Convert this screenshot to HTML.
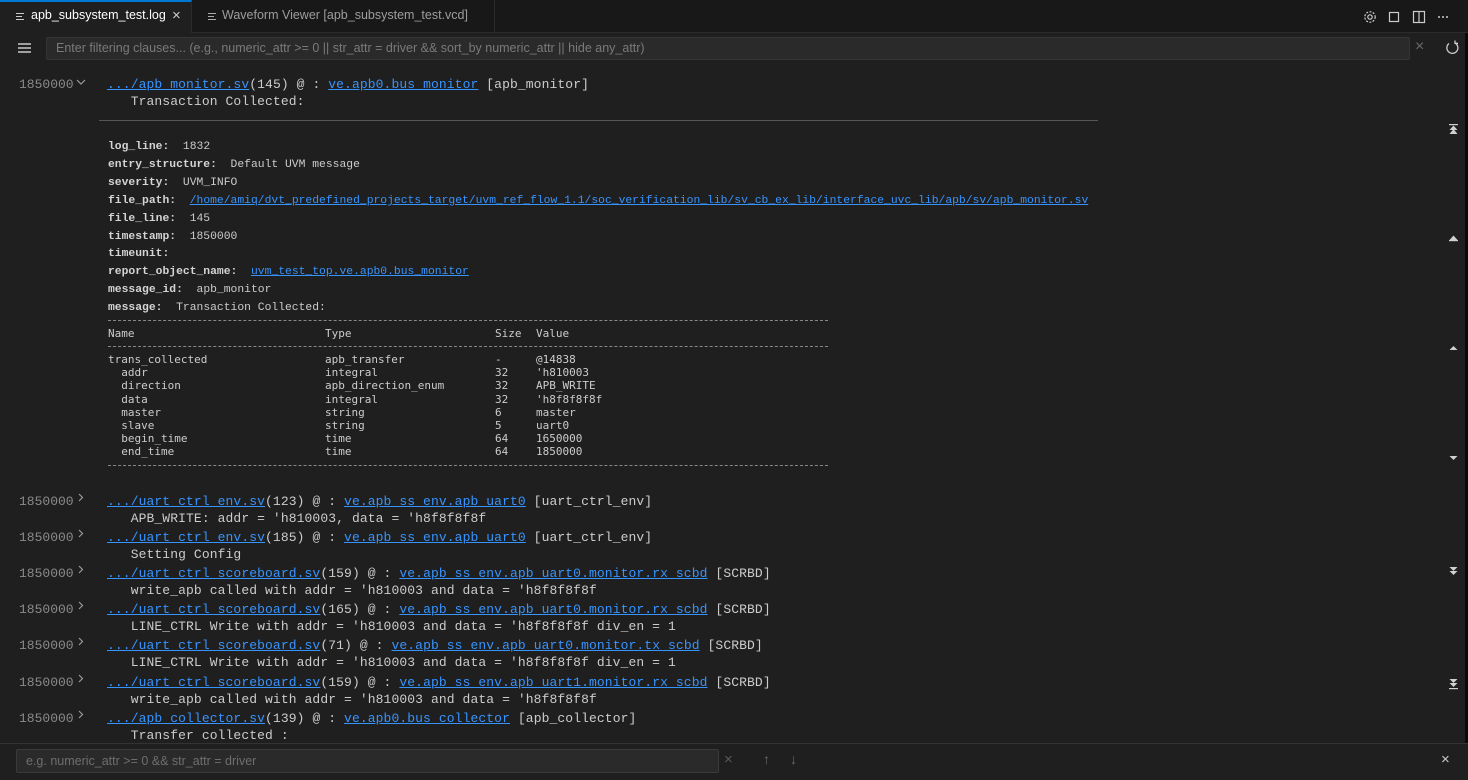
<!DOCTYPE html>
<html><head><meta charset="utf-8"><style>
*{margin:0;padding:0;box-sizing:border-box}
body{width:1468px;height:780px;background:#1f1f1f;color:#cccccc;font-family:"Liberation Sans",sans-serif;position:relative;overflow:hidden}
.a{position:absolute;white-space:pre}
.m{font-family:"Liberation Mono","DejaVu Sans Mono",monospace;font-size:13px;color:#cccccc;line-height:17px;letter-spacing:0.1px}
.ts{color:#8a8a8a;letter-spacing:0}
.ln{color:#3794ff;text-decoration:underline}
.d{font-family:"Liberation Mono",monospace;font-size:11.35px;color:#cccccc}
.d b{color:#d4d4d4}
.t{font-family:"DejaVu Sans Mono",monospace;font-size:11px;color:#cccccc;line-height:13.2px}
.sc{position:absolute;left:1449px;width:9px;height:9px}
</style></head><body>
<!-- tab bar -->
<div class="a" style="left:0;top:0;width:1468px;height:33px;background:#181818;border-bottom:1px solid #2b2b2b"></div>
<div class="a" style="left:0;top:0;width:192px;height:33px;background:#1f1f1f;border-top:2px solid #0078d4;border-right:1px solid #2b2b2b"></div>
<div class="a" style="left:192px;top:0;width:303px;height:32px;border-right:1px solid #2b2b2b"></div>
<svg class="a" style="left:16px;top:12px" width="9" height="9"><g stroke="#ccc" stroke-width="1"><line x1="0" y1="1.5" x2="8" y2="1.5"/><line x1="0" y1="4.5" x2="6" y2="4.5"/><line x1="0" y1="7.5" x2="8" y2="7.5"/></g></svg>
<div class="a" style="left:31px;top:8px;font-size:12.5px;color:#ffffff">apb_subsystem_test.log</div>
<div class="a" style="left:172px;top:7px;font-size:15px;color:#ccc">×</div>
<svg class="a" style="left:208px;top:12px" width="9" height="9"><g stroke="#aaa" stroke-width="1"><line x1="0" y1="1.5" x2="8" y2="1.5"/><line x1="0" y1="4.5" x2="6" y2="4.5"/><line x1="0" y1="7.5" x2="8" y2="7.5"/></g></svg>
<div class="a" style="left:222px;top:8px;font-size:12.5px;color:#9d9d9d">Waveform Viewer [apb_subsystem_test.vcd]</div>
<svg class="a" style="left:1362px;top:9px" width="90" height="16" viewBox="0 0 90 16" fill="none" stroke="#cccccc" stroke-width="1.2">
<circle cx="8" cy="8" r="2.2"/><circle cx="8" cy="8" r="5.2" stroke-dasharray="2 1.4"/>
<rect x="27.5" y="3.5" width="9" height="9"/>
<rect x="51.5" y="2.5" width="11" height="11"/><line x1="57" y1="2.5" x2="57" y2="13.5"/>
<g fill="#ccc" stroke="none"><circle cx="77" cy="8" r="1"/><circle cx="81" cy="8" r="1"/><circle cx="85" cy="8" r="1"/></g>
</svg>
<!-- filter row -->
<svg class="a" style="left:18px;top:42px" width="13" height="12"><g stroke="#ccc" stroke-width="1.5"><line x1="0" y1="2" x2="13" y2="2"/><line x1="0" y1="6" x2="13" y2="6"/><line x1="0" y1="10" x2="13" y2="10"/></g></svg>
<div class="a" style="left:46px;top:37px;width:1364px;height:23px;background:#2a2a2a;border:1px solid #353535;border-radius:2px"></div>
<div class="a" style="left:56px;top:41px;font-size:12.5px;color:#7a7a7a">Enter filtering clauses... (e.g., numeric_attr &gt;= 0 || str_attr = driver &amp;&amp; sort_by numeric_attr || hide any_attr)</div>
<div class="a" style="left:1415px;top:38px;font-size:16px;color:#6a6a6a">×</div>
<svg class="a" style="left:1445px;top:40px" width="15" height="15" fill="none" stroke="#ccc" stroke-width="1.3"><path d="M4 3.5 A5.5 5.5 0 1 0 10 3"/><path d="M10 0.5 V3.3 H13"/></svg>
<!-- first entry -->
<div class="a m ts" style="left:19px;top:76px">1850000</div>
<svg class="a" style="left:76px;top:79px" width="10" height="7"><path d="M1 1 L5 5 L9 1" stroke="#9a9a9a" fill="none" stroke-width="1.2"/></svg>
<div class="a m" style="left:107px;top:76px"><span class="ln">.../apb_monitor.sv</span>(145) @ : <span class="ln">ve.apb0.bus_monitor</span> [apb_monitor]
   Transaction Collected:</div>
<div class="a" style="left:99px;top:120px;width:999px;height:1px;background:#555"></div>
<div class="a d" style="left:108px;top:139px;line-height:17.9px"><b>log_line:</b>  1832
<b>entry_structure:</b>  Default UVM message
<b>severity:</b>  UVM_INFO
<b>file_path:</b>  <span class="ln">/home/amiq/dvt_predefined_projects_target/uvm_ref_flow_1.1/soc_verification_lib/sv_cb_ex_lib/interface_uvc_lib/apb/sv/apb_monitor.sv</span>
<b>file_line:</b>  145
<b>timestamp:</b>  1850000
<b>timeunit:</b>
<b>report_object_name:</b>  <span class="ln">uvm_test_top.ve.apb0.bus_monitor</span>
<b>message_id:</b>  apb_monitor
<b>message:</b>  Transaction Collected:</div>
<!-- table -->
<div class="a" style="left:108px;top:320px;width:720px;border-top:1px dashed #888"></div>
<div class="a" style="left:108px;top:346px;width:720px;border-top:1px dashed #888"></div>
<div class="a" style="left:108px;top:465px;width:720px;border-top:1px dashed #888"></div>
<div class="a t" style="left:108px;top:327px">Name</div><div class="a t" style="left:325px;top:327px">Type</div><div class="a t" style="left:495px;top:327px">Size</div><div class="a t" style="left:536px;top:327px">Value</div>
<div class="a t" style="left:108px;top:353px">trans_collected
  addr
  direction
  data
  master
  slave
  begin_time
  end_time</div>
<div class="a t" style="left:325px;top:353px">apb_transfer
integral
apb_direction_enum
integral
string
string
time
time</div>
<div class="a t" style="left:495px;top:353px">-
32
32
32
6
5
64
64</div>
<div class="a t" style="left:536px;top:353px">@14838
'h810003
APB_WRITE
'h8f8f8f8f
master
uart0
1650000
1850000</div>
<!-- entries -->
<svg class="a" style="left:77px;top:490px" width="8" height="240"><g stroke="#9a9a9a" fill="none" stroke-width="1.2">
<path d="M2 4 L5.5 7.5 L2 11"/><path transform="translate(0,36)" d="M2 4 L5.5 7.5 L2 11"/><path transform="translate(0,72)" d="M2 4 L5.5 7.5 L2 11"/><path transform="translate(0,108)" d="M2 4 L5.5 7.5 L2 11"/><path transform="translate(0,144)" d="M2 4 L5.5 7.5 L2 11"/><path transform="translate(0,181)" d="M2 4 L5.5 7.5 L2 11"/><path transform="translate(0,217)" d="M2 4 L5.5 7.5 L2 11"/></g></svg>
<div class="a m ts" style="left:19px;top:493px">1850000</div>
<div class="a m" style="left:107px;top:493px"><span class="ln">.../uart_ctrl_env.sv</span>(123) @ : <span class="ln">ve.apb_ss_env.apb_uart0</span> [uart_ctrl_env]
   APB_WRITE: addr = 'h810003, data = 'h8f8f8f8f</div>
<div class="a m ts" style="left:19px;top:529px">1850000</div>
<div class="a m" style="left:107px;top:529px"><span class="ln">.../uart_ctrl_env.sv</span>(185) @ : <span class="ln">ve.apb_ss_env.apb_uart0</span> [uart_ctrl_env]
   Setting Config</div>
<div class="a m ts" style="left:19px;top:565px">1850000</div>
<div class="a m" style="left:107px;top:565px"><span class="ln">.../uart_ctrl_scoreboard.sv</span>(159) @ : <span class="ln">ve.apb_ss_env.apb_uart0.monitor.rx_scbd</span> [SCRBD]
   write_apb called with addr = 'h810003 and data = 'h8f8f8f8f</div>
<div class="a m ts" style="left:19px;top:601px">1850000</div>
<div class="a m" style="left:107px;top:601px"><span class="ln">.../uart_ctrl_scoreboard.sv</span>(165) @ : <span class="ln">ve.apb_ss_env.apb_uart0.monitor.rx_scbd</span> [SCRBD]
   LINE_CTRL Write with addr = 'h810003 and data = 'h8f8f8f8f div_en = 1</div>
<div class="a m ts" style="left:19px;top:637px">1850000</div>
<div class="a m" style="left:107px;top:637px"><span class="ln">.../uart_ctrl_scoreboard.sv</span>(71) @ : <span class="ln">ve.apb_ss_env.apb_uart0.monitor.tx_scbd</span> [SCRBD]
   LINE_CTRL Write with addr = 'h810003 and data = 'h8f8f8f8f div_en = 1</div>
<div class="a m ts" style="left:19px;top:674px">1850000</div>
<div class="a m" style="left:107px;top:674px"><span class="ln">.../uart_ctrl_scoreboard.sv</span>(159) @ : <span class="ln">ve.apb_ss_env.apb_uart1.monitor.rx_scbd</span> [SCRBD]
   write_apb called with addr = 'h810003 and data = 'h8f8f8f8f</div>
<div class="a m ts" style="left:19px;top:710px">1850000</div>
<div class="a m" style="left:107px;top:710px"><span class="ln">.../apb_collector.sv</span>(139) @ : <span class="ln">ve.apb0.bus_collector</span> [apb_collector]
   Transfer collected :</div>
<!-- right decorations -->
<div class="a" style="left:1465px;top:33px;width:3px;height:710px;background:#0a0a0a"></div>
<svg class="a" style="left:1448px;top:124px" width="11" height="570" fill="#d0d0d0">
<rect x="1" y="0" width="9" height="1.2"/><path d="M5.5 1.5 L9.5 6 H1.5Z"/><path d="M5.5 5 L9.5 10 H1.5Z"/>
<path transform="translate(0,110)" d="M5.5 1.5 L9.5 6 H1.5Z"/><rect transform="translate(0,110)" x="1" y="6" width="9" height="1.2"/>
<path transform="translate(0,220)" d="M5.5 2 L9.5 6 H1.5Z"/>
<path transform="translate(0,330)" d="M1.5 2 H9.5 L5.5 6Z"/>
<path transform="translate(0,442)" d="M1.5 1 H9.5 L5.5 5Z M1.5 5 H9.5 L5.5 9Z"/>
<path transform="translate(0,554)" d="M1.5 1 H9.5 L5.5 5Z M1.5 5 H9.5 L5.5 9Z"/><rect transform="translate(0,554)" x="1" y="10" width="9" height="1.2"/>
</svg>
<!-- bottom bar -->
<div class="a" style="left:0;top:743px;width:1468px;height:37px;background:#1f1f1f;border-top:1px solid #333"></div>
<div class="a" style="left:16px;top:749px;width:703px;height:24px;background:#2a2a2a;border:1px solid #3a3a3a;border-radius:2px"></div>
<div class="a" style="left:26px;top:754px;font-size:12.5px;color:#6e6e6e">e.g. numeric_attr &gt;= 0 &amp;&amp; str_attr = driver</div>
<div class="a" style="left:724px;top:751px;font-size:15px;color:#5a5a5a">×</div>
<div class="a" style="left:763px;top:751px;font-size:14px;color:#6a6a6a">&#8593;</div>
<div class="a" style="left:790px;top:751px;font-size:14px;color:#6a6a6a">&#8595;</div>
<div class="a" style="left:1441px;top:751px;font-size:15px;color:#ccc">×</div>
</body></html>
